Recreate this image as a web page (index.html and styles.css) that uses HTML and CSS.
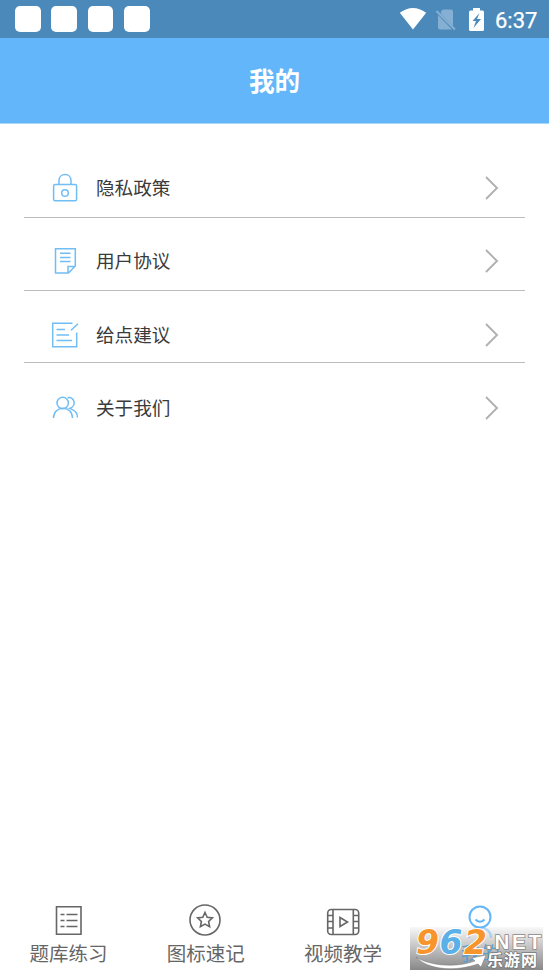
FILE: index.html
```html
<!DOCTYPE html>
<html lang="zh-CN">
<head>
<meta charset="utf-8">
<title>我的</title>
<link rel="stylesheet" href="styles.css">
</head>
<body>
<div class="app">
  <div class="status">
    <div class="notices"><i></i><i></i><i></i><i></i></div>
    <div class="system">
      <svg class="wifi" width="28" height="22" viewBox="0 0 28 22"><path d="M.8 4.8Q14-4.6 27.2 4.8L14 21.5Z" fill="#fff"/></svg>
      <svg class="sim" width="20" height="22" viewBox="0 0 20 22"><path d="M7 .5H15Q17 .5 17 2.500V17L5 5V2.500ZM2 6L16 20.500H4Q2 20.500 2 18.500Z" fill="#86b0d3"/><path d="M.5 2L19 20.500" stroke="#86b0d3" stroke-width="2"/></svg>
      <svg class="battery" width="15" height="23" viewBox="0 0 15 23"><path d="M4 0H11V2.500H13.500Q15 2.500 15 4V21.500Q15 23 13.500 23H1.500Q0 23 0 21.500V4Q0 2.500 1.500 2.500H4Z" fill="#fff"/><path d="M10.500 5L3.500 13H7L4.500 20L12 11H8Z" fill="#4a89ba"/></svg>
      <span class="time">6:37</span>
    </div>
  </div>
  <header class="title">我的</header>
  <main class="menu">
    <div class="row privacy">
      <svg class="icon" width="30" height="30" viewBox="0 0 30 30"><rect x="3.600" y="11.500" width="23" height="16.300" rx="1.500"/><path d="M9 11.500V7.600C9-.6 21-.6 21 7.600V11.500"/><circle cx="15" cy="20" r="3.300"/></svg>
      <span>隐私政策</span>
      <svg class="arrow" width="16" height="26" viewBox="0 0 16 26"><path d="M2 2L13 13L2 24"/></svg>
    </div>
    <div class="row terms">
      <svg class="icon" width="30" height="30" viewBox="0 0 30 30"><path d="M5.500 2.700H25.300V20L18.500 27H5.500ZM18 27V20.500H25M10 7.300H20.500M10 11.500H20.500M10 15.500H20.500"/></svg>
      <span>用户协议</span>
      <svg class="arrow" width="16" height="26" viewBox="0 0 16 26"><path d="M2 2L13 13L2 24"/></svg>
    </div>
    <div class="row advice">
      <svg class="icon" width="30" height="30" viewBox="0 0 30 30"><path d="M22.500 3.200H2.700V26.800H26.700V12.500M21 10.200L28 3.700M6.500 9.500H15M6.500 15H19M6.500 20.500H22"/></svg>
      <span>给点建议</span>
      <svg class="arrow" width="16" height="26" viewBox="0 0 16 26"><path d="M2 2L13 13L2 24"/></svg>
    </div>
    <div class="row about">
      <svg class="icon" width="30" height="30" viewBox="0 0 30 30"><circle cx="12.700" cy="10" r="5.700"/><path d="M3.500 25C3.500 12 22.500 12 22.500 25M17.500 4.800C24.500 3 27 13 19.800 15.400C24.500 17 27.500 20 27.500 24.500"/></svg>
      <span>关于我们</span>
      <svg class="arrow" width="16" height="26" viewBox="0 0 16 26"><path d="M2 2L13 13L2 24"/></svg>
    </div>
  </main>
  <nav class="tabs">
    <div class="tab">
      <svg width="36" height="36" viewBox="0 0 36 36"><path d="M5.500 4.700H30V32.300H5.500ZM9.500 12.500H13.500M15.500 12.500H26.500M9.500 18.500H13.500M15.500 18.500H26.500M9.500 24.500H13.500M15.500 24.500H26.500"/></svg>
      <span>题库练习</span>
    </div>
    <div class="tab">
      <svg width="36" height="36" viewBox="0 0 36 36"><circle cx="17" cy="18" r="15"/><path d="M17 10.500L19.200 15.300L24.400 15.900L20.600 19.500L21.600 24.700L17 22.100L12.400 24.700L13.400 19.500L9.600 15.900L14.800 15.300Z"/></svg>
      <span>图标速记</span>
    </div>
    <div class="tab">
      <svg width="36" height="36" viewBox="0 0 36 36"><rect x="2.700" y="7.500" width="31" height="25" rx="3.500"/><path d="M8 7.500V32.500M28.300 7.500V32.500M3 13.500H8M3 19.500H8M3 26H8M28.300 13.500H33.500M28.300 19.500H33.500M28.300 26H33.500M15 15.500V24.500L22.500 20Z"/></svg>
      <span>视频教学</span>
    </div>
    <div class="tab active">
      <svg width="36" height="36" viewBox="0 0 36 36"><circle cx="18" cy="15" r="10.500"/><path d="M13.500 17.500Q18 22 22.500 17.500"/><path class="body" d="M7 36C7 22 29 22 29 36"/></svg>
      <span>我的</span>
    </div>
  </nav>
  <div class="watermark">
    <svg width="133" height="43" viewBox="0 0 133 43">
      <path d="M6 30C20 39 46 41 65 34L62 31L76 28L71 40L68 37C45 45 18 43 6 30Z" fill="#fff" stroke="#777" stroke-width=".5"/>
      <g class="digits"><text x="6" y="26.500" fill="#f7952c">9</text><text x="29.500" y="26.500" fill="#5bb0e8">6</text><text x="54" y="26.500" fill="#f7952c">2</text></g>
      <text class="net" x="76" y="21.500" textLength="55">.NET</text>
      <text class="site" x="77" y="39">乐游网</text>
    </svg>
  </div>
</div>
</body>
</html>
```
FILE: styles.css
```css
* { box-sizing: border-box; }
body { margin: 0; background: #fff; font-family: Roboto, "Noto Sans CJK SC", sans-serif; }
svg { display: block; flex: none; }
.app { position: relative; width: 549px; height: 976px; display: flex; flex-direction: column; overflow: hidden; }
.status { height: 38px; flex: none; display: flex; justify-content: space-between; background: #4a89ba; padding: 6px 12px 0 15px; }
.notices { display: flex; gap: 10.7px; }
.notices i { width: 25.7px; height: 26px; border-radius: 5px; background: #fff; }
.system { display: flex; align-items: flex-start; color: #fff; }
.wifi { margin: 2px 9px 0 0; }
.sim { margin: 3px 13px 0 0; }
.battery { margin: 2px 11px 0 0; }
.time { font-size: 22px; line-height: 29px; -webkit-text-stroke: .25px #fff; width: 42px; white-space: nowrap; }
.title { height: 86px; flex: none; border-bottom: 1px solid #a9d7fc; background: #63b6f9; color: #fff; font-size: 25.6px; font-weight: 700; line-height: 88px; text-align: center; }
.menu { flex: 1; padding: 35px 24px 0; }
.row { display: flex; align-items: center; padding: 28px 25px 14px 26px; border-bottom: 1px solid #bbb; color: #3a3a3a; font-size: 18.6px; line-height: 30px; }
.row span { margin-left: 16px; padding-top: 1px; height: 30px; flex: 1; }
.privacy { padding-top: 14px; }
.advice { padding-top: 29px; padding-bottom: 12px; }
.about { padding-top: 30px; border-bottom: 0; }
.icon { fill: none; stroke: #71bdf4; stroke-width: 1.5; }
.arrow { fill: none; stroke: #b0b0b0; stroke-width: 1.9; }
.tabs { height: 74px; flex: none; display: grid; grid-template-columns: repeat(4, 1fr); position: relative; }
.tabs::before { content: ""; position: absolute; right: 6px; top: 25px; width: 133px; height: 43px; background: linear-gradient(#f8f8f8, #888); }
.tab { position: relative; display: flex; flex-direction: column; align-items: center; color: #666; font-size: 19.5px; line-height: 30px; }
.tab svg { fill: none; stroke: #666; stroke-width: 1.6; }
.tab span { margin-top: 2px; }
.tab.active { color: #5a9fd2; }
.tab.active svg { stroke: #63b6f9; stroke-width: 2; }
.tab.active .body { opacity: .5; }
.watermark { position: absolute; left: 410px; top: 927px; width: 133px; height: 43px; }
.watermark svg { overflow: visible; }
.digits { font: italic 700 33px "DejaVu Sans", sans-serif; stroke: #fff; stroke-width: 2px; paint-order: stroke; }
.net { font: 700 20.5px "Liberation Sans", sans-serif; fill: #fff; stroke: #888; stroke-width: 1.6px; paint-order: stroke; }
.site { font: 700 16px "Noto Sans CJK SC", sans-serif; letter-spacing: 1px; fill: #fff; stroke: #777; stroke-width: 1.5px; paint-order: stroke; }
```
